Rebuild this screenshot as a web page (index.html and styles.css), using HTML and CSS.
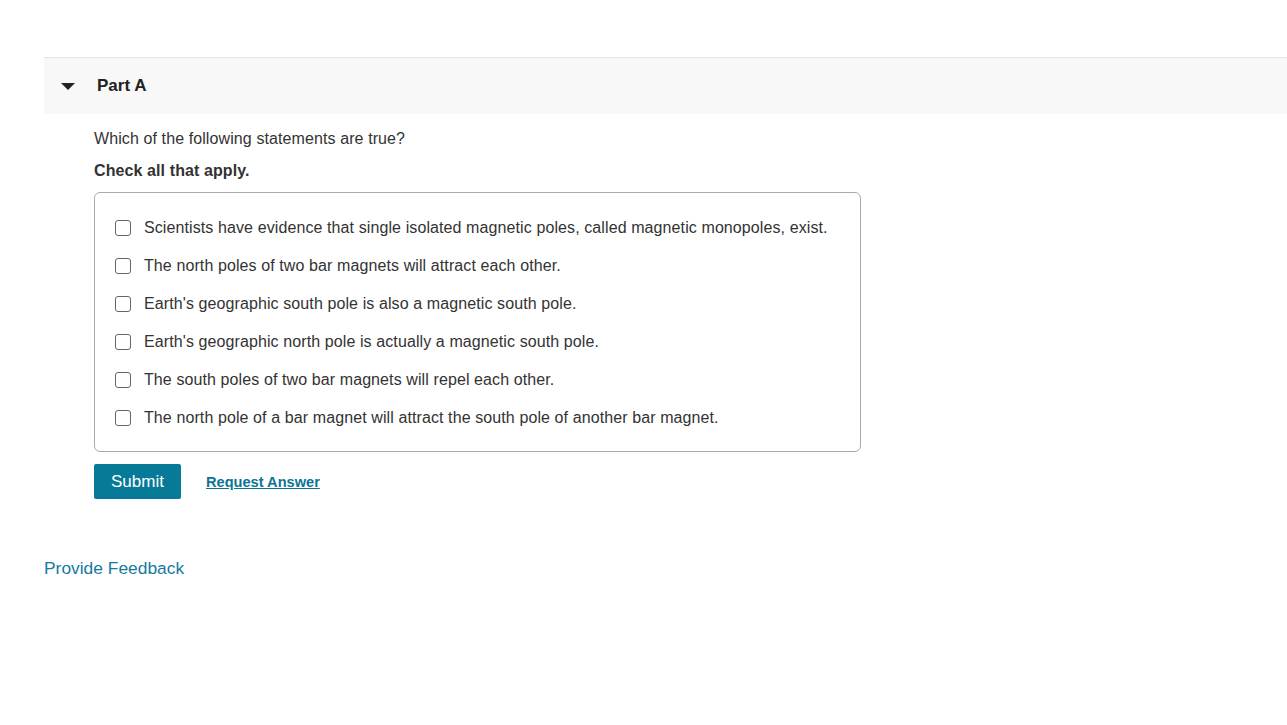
FILE: index.html
```html
<!DOCTYPE html>
<html>
<head>
<meta charset="utf-8">
<link rel="stylesheet" href="styles.css">
</head>
<body>
<div class="page">
  <section class="part">
    <div class="part-header">
      <span class="caret"></span>
      <h2 class="part-title">Part A</h2>
    </div>
    <div class="part-body">
      <p class="question">Which of the following statements are true?</p>
      <p class="instruction">Check all that apply.</p>
      <div class="choices">
        <label class="choice"><input type="checkbox"><span>Scientists have evidence that single isolated magnetic poles, called magnetic monopoles, exist.</span></label>
        <label class="choice"><input type="checkbox"><span>The north poles of two bar magnets will attract each other.</span></label>
        <label class="choice"><input type="checkbox"><span>Earth's geographic south pole is also a magnetic south pole.</span></label>
        <label class="choice"><input type="checkbox"><span>Earth's geographic north pole is actually a magnetic south pole.</span></label>
        <label class="choice"><input type="checkbox"><span>The south poles of two bar magnets will repel each other.</span></label>
        <label class="choice"><input type="checkbox"><span>The north pole of a bar magnet will attract the south pole of another bar magnet.</span></label>
      </div>
      <div class="actions">
        <button class="submit">Submit</button>
        <a class="request" href="#">Request Answer</a>
      </div>
    </div>
  </section>
  <a class="feedback" href="#">Provide Feedback</a>
</div>
</body>
</html>
```
FILE: styles.css
```css
* { box-sizing: border-box; }
html, body { margin: 0; padding: 0; background: #fff; }
body {
  font-family: "Liberation Sans", Arial, sans-serif;
  color: #333;
}
.page {
  padding: 57px 0 0 44px;
}
.part-header {
  display: flex;
  align-items: center;
  height: 57px;
  background: #f8f8f8;
  border-top: 1px solid #e3e3e3;
}
.caret {
  width: 0;
  height: 0;
  margin-left: 17px;
  border-left: 7px solid transparent;
  border-right: 7px solid transparent;
  border-top: 7px solid #222;
  margin-top: 1px;
}
.part-title {
  margin: 0 0 0 22px;
  font-size: 17px;
  font-weight: bold;
  color: #222;
}
.part-body {
  padding: 15px 0 0 50px;
  letter-spacing: 0.1px;
}
.question {
  margin: 0;
  font-size: 16px;
  line-height: 20px;
}
.instruction {
  margin: 12px 0 0;
  font-size: 16px;
  line-height: 20px;
  font-weight: bold;
}
.choices {
  margin-top: 11px;
  width: 767px;
  border: 1px solid #aaa;
  border-radius: 6px;
  padding: 25px 0 23px 20px;
  display: flex;
  flex-direction: column;
  gap: 18px;
}
.choice {
  display: flex;
  align-items: center;
  font-size: 16px;
  line-height: 20px;
}
.choice input {
  width: 16px;
  height: 16px;
  margin: 0 13px 0 0;
  appearance: none;
  border: 1px solid #666;
  border-radius: 3px;
  background: #fff;
}
.actions {
  display: flex;
  align-items: center;
  margin-top: 12px;
}
.submit {
  font-family: inherit;
  font-size: 17px;
  letter-spacing: 0;
  color: #fff;
  background: #077a98;
  border: 0;
  border-radius: 2px;
  width: 87px;
  height: 35px;
  padding: 0;
}
.request {
  margin-left: 25px;
  font-size: 14.6px;
  letter-spacing: 0;
  font-weight: bold;
  color: #0d7494;
  text-decoration: underline;
}
.feedback {
  display: inline-block;
  margin-top: 59px;
  font-size: 17.4px;
  color: #157aa0;
  text-decoration: none;
}
```
